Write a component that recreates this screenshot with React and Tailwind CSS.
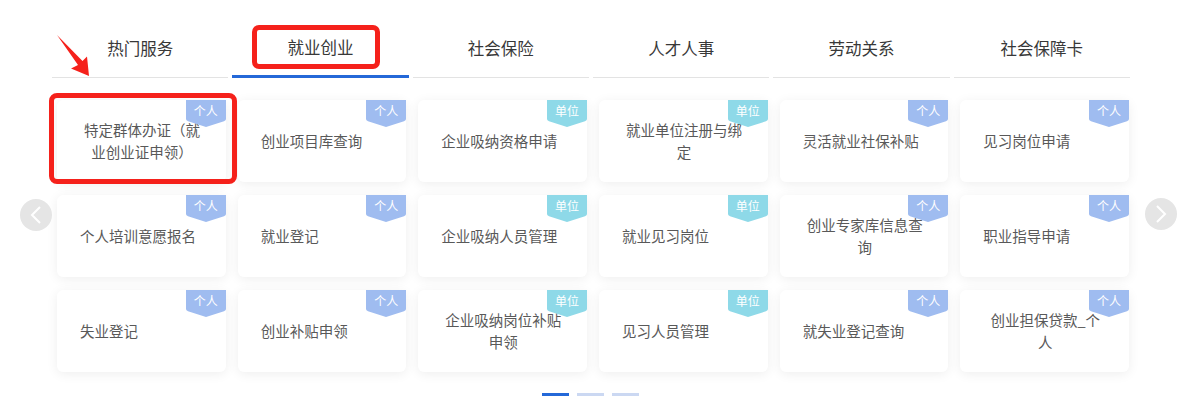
import React from 'react';

const tabs = ['热门服务', '就业创业', '社会保险', '人才人事', '劳动关系', '社会保障卡'];

const items = [
  ['特定群体办证（就业创业证申领）', '个人'],
  ['创业项目库查询', '个人'],
  ['企业吸纳资格申请', '单位'],
  ['就业单位注册与绑定', '单位'],
  ['灵活就业社保补贴', '个人'],
  ['见习岗位申请', '个人'],
  ['个人培训意愿报名', '个人'],
  ['就业登记', '个人'],
  ['企业吸纳人员管理', '单位'],
  ['就业见习岗位', '单位'],
  ['创业专家库信息查询', '个人'],
  ['职业指导申请', '个人'],
  ['失业登记', '个人'],
  ['创业补贴申领', '个人'],
  ['企业吸纳岗位补贴申领', '单位'],
  ['见习人员管理', '单位'],
  ['就失业登记查询', '个人'],
  ['创业担保贷款_个人', '个人'],
];

const Badge = ({ type }) => {
  const color = type === '单位' ? '#8ed9e8' : '#9fbcf0';
  return (
    <div className="absolute top-0 right-0 w-[40px] h-[27px]">
      <svg width="40" height="27" viewBox="0 0 40 27" className="absolute inset-0">
        <path d="M0 0H40V19Q40 20.5 38 21.3L20 27L2 21.3Q0 20.5 0 19Z" fill={color} />
      </svg>
      <span className="absolute left-0 right-0 top-[3px] text-center text-[12px] leading-[16px] text-white">
        {type}
      </span>
    </div>
  );
};

const Card = ({ title, type }) => (
  <div className="relative h-[82px] bg-white rounded-[6px] shadow-[0_2px_12px_rgba(0,0,0,0.07)] flex items-center pl-[23px]">
    <div className="max-w-[124px] text-center text-[14.5px] leading-[22px] text-[#595959]">{title}</div>
    <Badge type={type} />
  </div>
);

const Chevron = ({ dir }) => (
  <svg width="14" height="20" viewBox="0 0 14 20">
    <path
      d={dir === 'left' ? 'M11 2L3 10L11 18' : 'M3 2L11 10L3 18'}
      fill="none"
      stroke="#fff"
      strokeWidth="2"
    />
  </svg>
);

export default function App() {
  return (
    <div
      className="relative w-[1200px] h-[399px] bg-white overflow-hidden"
      style={{ fontFamily: '"Noto Sans CJK SC", "Noto Sans", sans-serif' }}
    >
      {/* tabs */}
      <div className="grid grid-cols-6 ml-[50px] w-[1082px]">
        {tabs.map((t, i) => (
          <div key={t} className="px-[2px]">
            <div
              className={`h-[78px] flex items-center justify-center pt-[19px] text-[16.5px] text-[#383838] ${
                i === 1 ? 'border-b-[3px] border-[#2468d8]' : 'border-b border-[#e3e3e3]'
              }`}
            >
              {t}
            </div>
          </div>
        ))}
      </div>

      {/* service cards */}
      <div className="grid grid-cols-6 gap-x-[12px] gap-y-[13px] ml-[57px] mt-[22px] w-[1072px]">
        {items.map(([title, type]) => (
          <Card key={title} title={title} type={type} />
        ))}
      </div>

      {/* pager */}
      <div className="flex gap-[8px] ml-[542px] mt-[21px]">
        <div className="w-[27px] h-[3px] bg-[#2468d8]" />
        <div className="w-[27px] h-[3px] bg-[#cbd8f2]" />
        <div className="w-[27px] h-[3px] bg-[#cbd8f2]" />
      </div>

      {/* carousel arrows */}
      <div className="absolute left-[20px] top-[199px] w-[32px] h-[32px] rounded-full bg-[#e5e5e5] flex items-center justify-center">
        <Chevron dir="left" />
      </div>
      <div className="absolute left-[1145px] top-[198px] w-[32px] h-[32px] rounded-full bg-[#e5e5e5] flex items-center justify-center">
        <Chevron dir="right" />
      </div>

      {/* red annotations */}
      <div className="absolute left-[252px] top-[25px] w-[128px] h-[44px] border-[5px] border-[#f5211b] rounded-[7px]" />
      <div className="absolute left-[49px] top-[93px] w-[188px] h-[91px] border-[5px] border-[#f5211b] rounded-[8px]" />
      <svg className="absolute left-0 top-0 pointer-events-none" width="120" height="90" viewBox="0 0 120 90">
        <polygon
          points="57,35 82.5,61 87,56.5 89,76 71,68.5 78,65"
          fill="#f5211b"
        />
      </svg>
    </div>
  );
}
